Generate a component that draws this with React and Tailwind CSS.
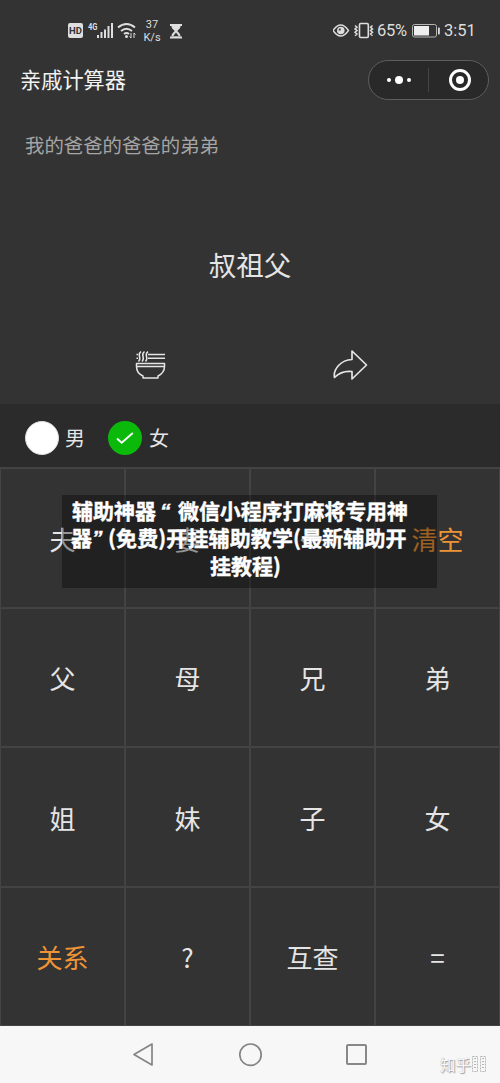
import React from "react";

const keys = ["夫", "妻", "←", "清空", "父", "母", "兄", "弟", "姐", "妹", "子", "女", "关系", "?", "互查", "="];

function StatusBar() {
  return (
    <header className="flex h-[60px] shrink-0 items-center pt-0.5 pl-[68px] pr-6 font-['Roboto',sans-serif] text-[#dedede]">
      <svg className="h-10 w-[72px] shrink-0" viewBox="0 0 72 40" fill="none" stroke="currentColor">
        <rect x="0" y="12" width="15" height="15" rx="2" fill="currentColor" stroke="none" />
        <text x="7.5" y="23.3" textAnchor="middle" fontSize="9.5" fontWeight="700" fill="#333" stroke="none">HD</text>
        <text x="20" y="18.5" fontSize="9" fontWeight="700" fill="currentColor" stroke="none" textLength="9.500" lengthAdjust="spacingAndGlyphs">4G</text>
        <path d="M30 27v-3M33.5 27v-6M37 27v-8.500M40.500 27V15M44 27V12" strokeWidth="2" />
        <path d="M50 16.500q8.500-7 17 0M53 20q5.500-4.500 11 0M56 23q2.500-2 5 0" strokeWidth="2" />
        <circle cx="58.500" cy="25.500" r="1.500" fill="currentColor" stroke="none" />
        <path d="M63 22v5m-1.500-1.500L63 27M66 27v-5l1.500 1.500" strokeWidth="1" />
      </svg>
      <div className="ml-0.5 w-5 shrink-0 text-center text-[11px] leading-[13px]">37<br />K/s</div>
      <svg className="ml-2 h-4 w-3 shrink-0" viewBox="0 0 12 16" fill="currentColor">
        <path d="M0 1h12v2H0zM0 13.500h12v2H0z" />
        <path d="M1.500 3h9c0 3-3 4-3 5s3 2 3 5.500h-9c0-3.500 3-4.500 3-5.500s-3-2-3-5z" />
        <path d="M6 9.500l2.700 3.500H3.300z" fill="#333" />
      </svg>
      <svg className="ml-auto h-6 w-[44px] shrink-0" viewBox="0 0 44 24" fill="none" stroke="currentColor">
        <path d="M0 11.500q7.700-11 15.500 0q-7.800 11-15.500 0z" strokeWidth="1.400" />
        <circle cx="7.800" cy="11.500" r="3.800" fill="currentColor" stroke="none" />
        <path d="M7.600 11.500v-2.200a2.200 2.200 0 0 0-2.100 2.200z" fill="#333" stroke="none" />
        <rect x="26.500" y="4.500" width="8.800" height="14" rx="1.200" strokeWidth="1.600" />
        <path d="M22 6.500l2 1.700-2 1.700 2 1.700-2 1.700 2 1.700-2 1.700M39.500 6.500l-2 1.700 2 1.700-2 1.700 2 1.700-2 1.700 2 1.700" strokeWidth="1.500" />
      </svg>
      <span className="w-[33px] shrink-0 text-[16.500px] leading-5 tracking-[-0.3px]">65%</span>
      <svg className="ml-0.5 h-4 w-[29px] shrink-0" viewBox="0 0 29 16" fill="none">
        <rect x=".5" y="1.500" width="24" height="12.500" rx="2" stroke="#b5b5b5" />
        <rect x="2" y="3" width="15" height="9.500" fill="#eee" />
        <rect x="26" y="4.500" width="1.800" height="7" rx=".7" fill="#ddd" />
      </svg>
      <span className="ml-[3px] w-8 shrink-0 text-[16.500px] leading-5">3:51</span>
    </header>
  );
}

function Capsule() {
  return (
    <div className="flex h-10 w-[121px] items-center rounded-full border border-[#5e5e5e] bg-[#292929]">
      <div className="flex h-6 w-[60px] items-center justify-center gap-1 border-r border-[#454545]">
        <i className="size-1 rounded-full bg-white" />
        <i className="size-[8px] rounded-full bg-white" />
        <i className="size-1 rounded-full bg-white" />
      </div>
      <div className="flex flex-1 justify-center pl-0.5">
        <div className="flex size-[22px] items-center justify-center rounded-full border-[3px] border-white">
          <i className="size-2 rounded-full bg-white" />
        </div>
      </div>
    </div>
  );
}

export default function App() {
  return (
    <main className="relative flex h-[1083px] w-[500px] flex-col overflow-hidden bg-[#333] font-['Noto_Sans_CJK_SC',sans-serif] text-[#e5e5e5]">
      <StatusBar />
      <div className="flex h-10 shrink-0 items-center justify-between pl-5 pr-[11px]">
        <h1 className="pb-0.5 text-[21.200px] leading-8 text-[#f2f2f2]">亲戚计算器</h1>
        <Capsule />
      </div>
      <section className="flex h-[304px] shrink-0 flex-col">
        <p className="mt-[30px] pl-[25px] text-[19.400px] leading-[30px] text-[#a5a5a5]">我的爸爸的爸爸的弟弟</p>
        <p className="mt-[84px] text-center text-[27.500px] leading-10">叔祖父</p>
        <div className="mt-16 flex justify-between pr-[132px] pl-[135px]">
          <svg className="h-9 w-8" viewBox="0 0 32 36" fill="none" stroke="currentColor" strokeWidth="1.500" strokeLinejoin="round">
            <path d="M1.500 15.500h28v3c0 5-3.500 8-6.500 9.500v2H8v-2c-3.500-1.500-6.500-4.500-6.500-9.500zM2 18.500h27" />
            <path d="M13 6.500h17M13 10.300h17M1.500 6.500H3M1.500 10.300H3" strokeWidth="1.500" />
            <path d="M6 3.500q-2.500 2-1.500 5t-1 5M9.500 3.500q-2.500 2-1.500 5t-1 5M13 3.500q-2.500 2-1.500 5t-1 5" />
          </svg>
          <svg className="h-9 w-[35px]" viewBox="0 0 35 36" fill="none" stroke="currentColor" strokeWidth="1.700" strokeLinejoin="round">
            <path d="M19 3l14.500 14L19 31v-7.500C10.500 22.500 5 26 1.500 29.500 0 21 8 12 19 11.500z" />
          </svg>
        </div>
      </section>
      <div className="flex h-[63px] shrink-0 items-center bg-[#2b2b2b] pt-[5px] pl-[25px] text-[20px]">
        <span className="size-[34px] rounded-full border border-[#ddd] bg-white" />
        <span className="ml-[6px] w-5 leading-8">男</span>
        <span className="ml-[23px] flex size-[34px] items-center justify-center rounded-full bg-[#0bb90b]">
          <svg className="h-[14px] w-[18px]" viewBox="0 0 18 14" fill="none" stroke="white" strokeWidth="1.800"><path d="M1 7.500L5.700 11.700 16.800 2" /></svg>
        </span>
        <span className="ml-[7px] leading-8">女</span>
      </div>
      <div className="grid h-[559px] shrink-0 grid-cols-4 grid-rows-4 border-t border-[#444]">
        {keys.map((key, index) => (
          <div key={index} className={`flex items-center justify-center border border-[#444] pt-px text-[26px] shadow-[0_0_0_0.5px_#404040] ${key.length === 2 && key !== "互查" ? "text-[#ee9436]" : "text-[#e5e5e5]"}`}>{key}</div>
        ))}
      </div>
      <nav className="relative h-[57px] shrink-0 bg-[#f7f7f7]">
        <div className="flex h-[57px] items-center justify-between pr-[133px] pl-[132px]">
          <svg className="size-6" viewBox="0 0 24 24" fill="none" stroke="#858585" strokeWidth="1.700" strokeLinejoin="round"><path d="M20 1v21L2 11.500z" /></svg>
          <svg className="size-6" viewBox="0 0 24 24" fill="none" stroke="#858585" strokeWidth="1.700"><circle cx="11.500" cy="11.700" r="10.700" /></svg>
          <span className="size-[21px] rounded-[2px] border-2 border-[#888]" />
        </div>
        <div className="absolute top-[28px] left-[440px] flex items-center gap-px text-[15.500px] leading-5 text-[#f7f7f7] [text-shadow:1px_1px_1px_#999,-0.5px_-0.5px_0_#ccc]">
          <span>知乎</span>
          <svg className="h-4 w-[14px]" viewBox="0 0 14 16" fill="none" stroke="#b5b5b5" strokeWidth="1">
            <path d="M.5.500h5v15h-5zM8.500.500h5v15h-5z" strokeDasharray="2 1" />
            <path d="M3 2v12M11 2v12" strokeWidth="2" strokeDasharray="1 2" />
          </svg>
        </div>
      </nav>
      <div className="absolute top-[495px] left-[62px] h-[93px] w-[375px] bg-black/35 pt-[2px] text-[21px] leading-[27.300px] font-bold whitespace-pre text-white [-webkit-text-stroke:0.4px_white]">
        <p className="flex pl-[10px]"><span>辅助神器</span><span className="w-[22px] pl-1 font-['Liberation_Sans',sans-serif] italic">“</span><span className="tracking-[-0.1px]">微信小程序打麻将专用神</span></p>
        <p className="flex pl-[9px]"><span>器</span><span className="w-[16px] font-['Liberation_Sans',sans-serif] italic">”</span><span className="tracking-[0.12px]">(免费)开挂辅助教学(最新辅助开</span></p>
        <p className="pl-[148px]">挂教程)</p>
      </div>
    </main>
  );
}
